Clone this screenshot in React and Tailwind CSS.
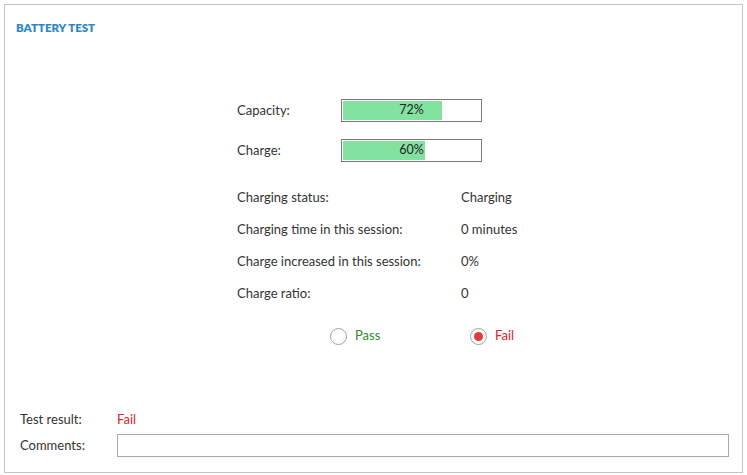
import React from "react";

const Bar = ({ value }) => (
  <div className="relative w-[141px] h-[23px] border border-[#7a7a7a] bg-white p-px">
    <div className="h-full bg-[#84e2a0]" style={{ width: `${value}%` }} />
    <div className="absolute inset-0 flex items-center justify-center text-[12.5px] text-[#222]">{value}%</div>
  </div>
);

const Radio = ({ checked, label, color, className = "" }) => (
  <label className={`flex items-center gap-[8px] ${className}`}>
    <span className="flex items-center justify-center w-[17px] h-[17px] rounded-full border border-[#a0a0a0] bg-white">
      {checked && <span className="w-[9px] h-[9px] rounded-full bg-[#e03a3e]" />}
    </span>
    <span className={`text-[13px] ${color}`}>{label}</span>
  </label>
);

const info = [
  ["Charging status:", "Charging"],
  ["Charging time in this session:", "0 minutes"],
  ["Charge increased in this session:", "0%"],
  ["Charge ratio:", "0"],
];

export default function App() {
  return (
    <div className="p-[4px] bg-white" style={{ fontFamily: "Lato, 'Open Sans', sans-serif" }}>
      <div className="w-[739px] h-[469px] border border-[#c4c4c4] flex flex-col text-[#333] text-[13px]">
        <h1 className="mt-[16px] ml-[11px] text-[11.5px] font-extrabold text-[#2f88c4] leading-[13px]">BATTERY TEST</h1>

        <div className="mt-[65px] ml-[232px] flex flex-col">
          <div className="flex flex-col gap-[17px]">
            <div className="flex items-center">
              <span className="w-[104px]">Capacity:</span>
              <Bar value={72} />
            </div>
            <div className="flex items-center">
              <span className="w-[104px]">Charge:</span>
              <Bar value={60} />
            </div>
          </div>

          <div className="mt-[20px] flex flex-col">
            {info.map(([k, v]) => (
              <div key={k} className="flex items-center h-[32px]">
                <span className="w-[224px]">{k}</span>
                <span>{v}</span>
              </div>
            ))}
          </div>

          <div className="mt-[10px] h-[32px] flex items-center ml-[93px]">
            <Radio label="Pass" color="text-[#2f8a2f]" className="w-[140px]" />
            <Radio checked label="Fail" color="text-[#d8262c]" />
          </div>
        </div>

        <div className="mt-auto mb-[15px] ml-[15px] mr-[13px] flex flex-col">
          <div className="flex items-center h-[26px]">
            <span className="w-[97px]">Test result:</span>
            <span className="text-[#d8262c]">Fail</span>
          </div>
          <div className="mt-[1px] flex items-center">
            <span className="w-[97px]">Comments:</span>
            <input className="flex-1 h-[23px] border border-[#a8a8a8] bg-white outline-none px-1" />
          </div>
        </div>
      </div>
    </div>
  );
}
